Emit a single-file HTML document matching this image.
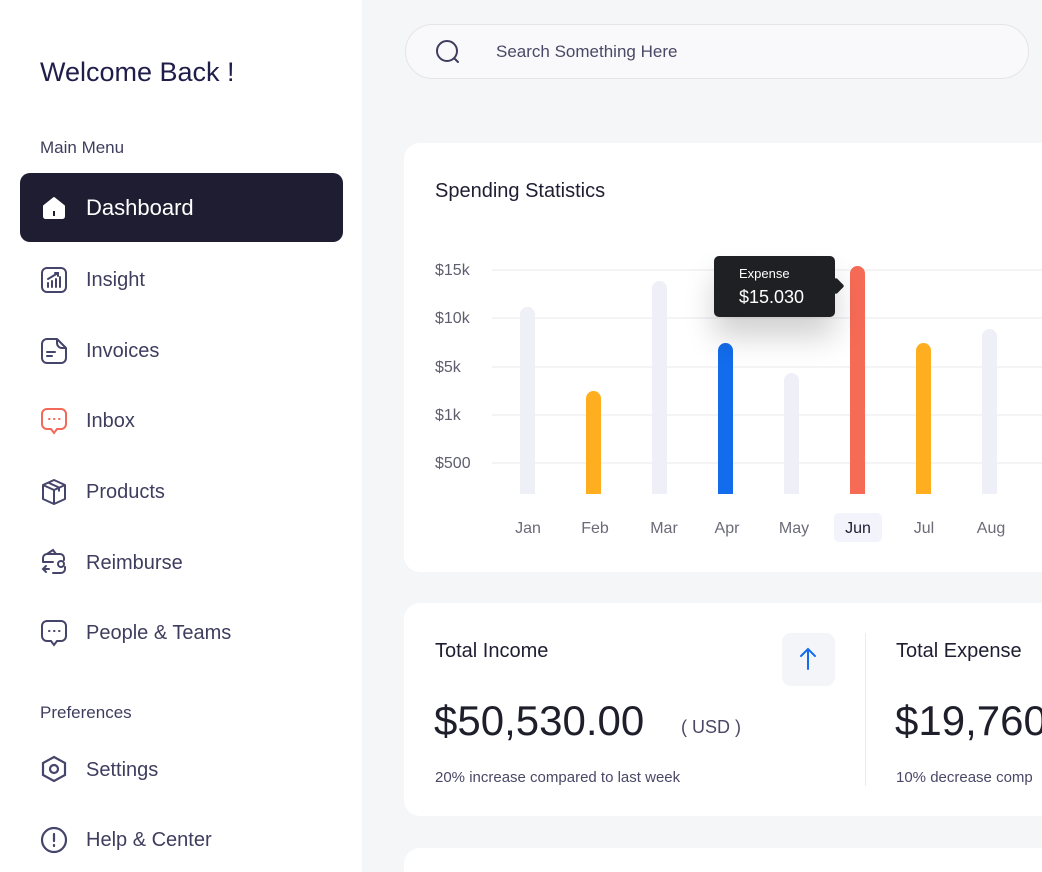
<!DOCTYPE html>
<html style="overflow:hidden;height:872px"><head><style>
*{margin:0;padding:0;box-sizing:border-box}
body{width:1042px;height:872px;overflow:hidden;background:#f5f6f8;font-family:"Liberation Sans",sans-serif;position:relative}
.abs{position:absolute}
#side{left:0;top:0;width:362px;height:872px;background:#fff}
.t{position:absolute;white-space:nowrap}
.nav{position:absolute;left:86px;font-size:20px;color:#3f3d5e}
.ic{position:absolute;left:40px;width:28px;height:28px}
.card{position:absolute;background:#fff;border-radius:16px}
.grid{position:absolute;left:492px;width:560px;height:2px;background:#f4f4f6}
.yl{position:absolute;left:435px;font-size:16px;color:#5e5e6e}
.bar{position:absolute;width:15px;border-radius:8px 8px 0 0;bottom:378px}
.ml{position:absolute;top:520px;font-size:16px;color:#6b6b78;width:50px;text-align:center}
</style></head><body>
<div id="side" class="abs">
<div class="t" style="left:40px;top:57px;font-size:27px;color:#1f1d4a">Welcome Back !</div>
<div class="t" style="left:40px;top:138px;font-size:17px;color:#3f3d5e">Main Menu</div>
<div class="abs" style="left:20px;top:173px;width:323px;height:69px;background:#1e1d31;border-radius:10px"></div>
<svg class="ic" style="top:194px" viewBox="0 0 28 28"><path d="M4 12 L14 4 L24 12 V22 Q24 24 22 24 H6 Q4 24 4 22Z" fill="#fff" stroke="#fff" stroke-width="2" stroke-linejoin="round"/><rect x="13" y="17" width="2" height="5" fill="#1e1d31"/></svg>
<div class="t" style="left:86px;top:195px;font-size:22px;color:#fff">Dashboard</div>
<svg class="ic" style="top:266px" viewBox="0 0 28 28" fill="none" stroke="#45446a" stroke-width="2"><rect x="2" y="2" width="24" height="24" rx="5"/><path d="M8 21v-4M12 21v-6M16 21v-8M20 21v-10M8 13l10-6M15 7h3v3" stroke-linecap="round"/></svg>
<div class="nav" style="top:269px">Insight</div>
<svg class="ic" style="top:337px" viewBox="0 0 28 28" fill="none" stroke="#45446a" stroke-width="2"><path d="M17 2H7a5 5 0 0 0-5 5v14a5 5 0 0 0 5 5h14a5 5 0 0 0 5-5V11z M17 2v4a5 5 0 0 0 5 5h4M7 15h8M7 19h5" stroke-linecap="round" stroke-linejoin="round"/></svg>
<div class="nav" style="top:340px">Invoices</div>
<svg class="ic" style="top:407px" viewBox="0 0 28 28" fill="none" stroke="#f2695a" stroke-width="2"><path d="M7 2h14a5 5 0 0 1 5 5v10a5 5 0 0 1-5 5h-4l-3 4-3-4H7a5 5 0 0 1-5-5V7a5 5 0 0 1 5-5z"/><path d="M9 12h.5M14 12h.5M19 12h.5" stroke-linecap="round"/></svg>
<div class="nav" style="top:410px">Inbox</div>
<svg class="ic" style="top:478px" viewBox="0 0 28 28" fill="none" stroke="#45446a" stroke-width="2" stroke-linejoin="round"><path d="M14 2l11 5v14l-11 5-11-5V7z M3 7l11 5 11-5 M14 12v14 M8 4.5l11 5v4"/></svg>
<div class="nav" style="top:481px">Products</div>
<svg class="ic" style="top:548px" viewBox="0 0 28 28" fill="none" stroke="#45446a" stroke-width="2" stroke-linecap="round"><path d="M3 10a4 4 0 0 1 4-4h13a4 4 0 0 1 4 4v2M3 10v4M13 25h8a4 4 0 0 0 4-4v-2M7 6l6-4 3 4M3 14h10M21 13a3 3 0 1 1 0 6 3 3 0 0 1 0-6M3 21h6M6 18l-3 3 3 3"/></svg>
<div class="nav" style="top:552px">Reimburse</div>
<svg class="ic" style="top:619px" viewBox="0 0 28 28" fill="none" stroke="#45446a" stroke-width="2"><path d="M7 2h14a5 5 0 0 1 5 5v10a5 5 0 0 1-5 5h-4l-3 4-3-4H7a5 5 0 0 1-5-5V7a5 5 0 0 1 5-5z"/><path d="M9 12h.5M14 12h.5M19 12h.5" stroke-linecap="round"/></svg>
<div class="nav" style="top:622px">People &amp; Teams</div>
<div class="t" style="left:40px;top:703px;font-size:17px;color:#3f3d5e">Preferences</div>
<svg class="ic" style="top:755px" viewBox="0 0 28 28" fill="none" stroke="#45446a" stroke-width="2.2"><path d="M14 2l11 6v12l-11 6-11-6V8z"/><circle cx="14" cy="14" r="4"/></svg>
<div class="nav" style="top:759px">Settings</div>
<svg class="ic" style="top:826px" viewBox="0 0 28 28" fill="none" stroke="#45446a" stroke-width="2.2"><circle cx="14" cy="14" r="12"/><path d="M14 8v7M14 19v1" stroke-linecap="round"/></svg>
<div class="nav" style="top:829px">Help &amp; Center</div>
</div>

<div class="abs" style="left:405px;top:24px;width:624px;height:55px;border-radius:28px;background:#f9f9fb;border:1px solid #e4e4ea"></div>
<svg class="abs" style="left:434px;top:38px" width="28" height="28" viewBox="0 0 28 28" fill="none" stroke="#3f3d5e" stroke-width="2"><circle cx="13" cy="13" r="10"/><path d="M21 21l3 3" stroke-linecap="round"/></svg>
<div class="t" style="left:496px;top:42px;font-size:17px;color:#4a4866">Search Something Here</div>

<div class="card" style="left:404px;top:143px;width:660px;height:429px"></div>
<div class="t" style="left:435px;top:180px;font-size:20px;color:#1e1d31">Spending Statistics</div>
<div class="grid" style="top:269px"></div><div class="grid" style="top:317px"></div><div class="grid" style="top:366px"></div><div class="grid" style="top:414px"></div><div class="grid" style="top:462px"></div>
<div class="yl" style="top:262px">$15k</div><div class="yl" style="top:310px">$10k</div><div class="yl" style="top:359px">$5k</div><div class="yl" style="top:407px">$1k</div><div class="yl" style="top:455px">$500</div>
<div class="bar" style="left:520px;height:187px;background:#efeff7"></div>
<div class="bar" style="left:586px;height:103px;background:#ffae1f"></div>
<div class="bar" style="left:652px;height:213px;background:#efeff7"></div>
<div class="bar" style="left:718px;height:151px;background:#136ceb"></div>
<div class="bar" style="left:784px;height:121px;background:#efeff7"></div>
<div class="bar" style="left:850px;height:228px;background:#f66b56"></div>
<div class="bar" style="left:916px;height:151px;background:#ffae1f"></div>
<div class="bar" style="left:982px;height:165px;background:#efeff7"></div>
<div class="abs" style="left:714px;top:256px;width:121px;height:61px;background:#1f2024;border-radius:5px;box-shadow:0 20px 30px rgba(0,0,0,.18)"></div>
<div class="abs" style="left:830px;top:280px;width:12px;height:12px;background:#1f2024;transform:rotate(45deg);border-radius:2px"></div>
<div class="t" style="left:739px;top:266px;font-size:13px;color:#fff">Expense</div>
<div class="t" style="left:739px;top:287px;font-size:18px;color:#fff">$15.030</div>
<div class="abs" style="left:834px;top:513px;width:48px;height:29px;background:#f3f3fb;border-radius:5px"></div>
<div class="ml" style="left:503px">Jan</div><div class="ml" style="left:570px">Feb</div><div class="ml" style="left:639px">Mar</div><div class="ml" style="left:702px">Apr</div><div class="ml" style="left:769px">May</div><div class="ml" style="left:833px;color:#1e1d31">Jun</div><div class="ml" style="left:899px">Jul</div><div class="ml" style="left:966px">Aug</div>

<div class="card" style="left:404px;top:603px;width:660px;height:213px"></div>
<div class="t" style="left:435px;top:640px;font-size:20px;color:#1e1d31">Total Income</div>
<div class="abs" style="left:782px;top:633px;width:53px;height:53px;background:#f4f5f8;border-radius:9px"></div>
<svg class="abs" style="left:796px;top:646px" width="24" height="26" viewBox="0 0 24 26" fill="none" stroke="#136ceb" stroke-width="2" stroke-linecap="round"><path d="M12 3v20M5 10l7-7 7 7"/></svg>
<div class="t" style="left:434px;top:697px;font-size:42px;color:#1e1f2b">$50,530.00</div>
<div class="t" style="left:681px;top:717px;font-size:18px;color:#4a4866">( USD )</div>
<div class="t" style="left:435px;top:769px;font-size:15px;color:#4a4866">20% increase compared to last week</div>
<div class="abs" style="left:865px;top:633px;width:1px;height:153px;background:#ececf0"></div>
<div class="t" style="left:896px;top:640px;font-size:20px;color:#1e1d31">Total Expense</div>
<div class="t" style="left:895px;top:697px;font-size:42px;color:#1e1f2b">$19,760</div>
<div class="t" style="left:896px;top:769px;font-size:15px;color:#4a4866">10% decrease comp</div>

<div class="card" style="left:404px;top:848px;width:660px;height:24px;border-radius:16px 16px 0 0"></div>
</body></html>
